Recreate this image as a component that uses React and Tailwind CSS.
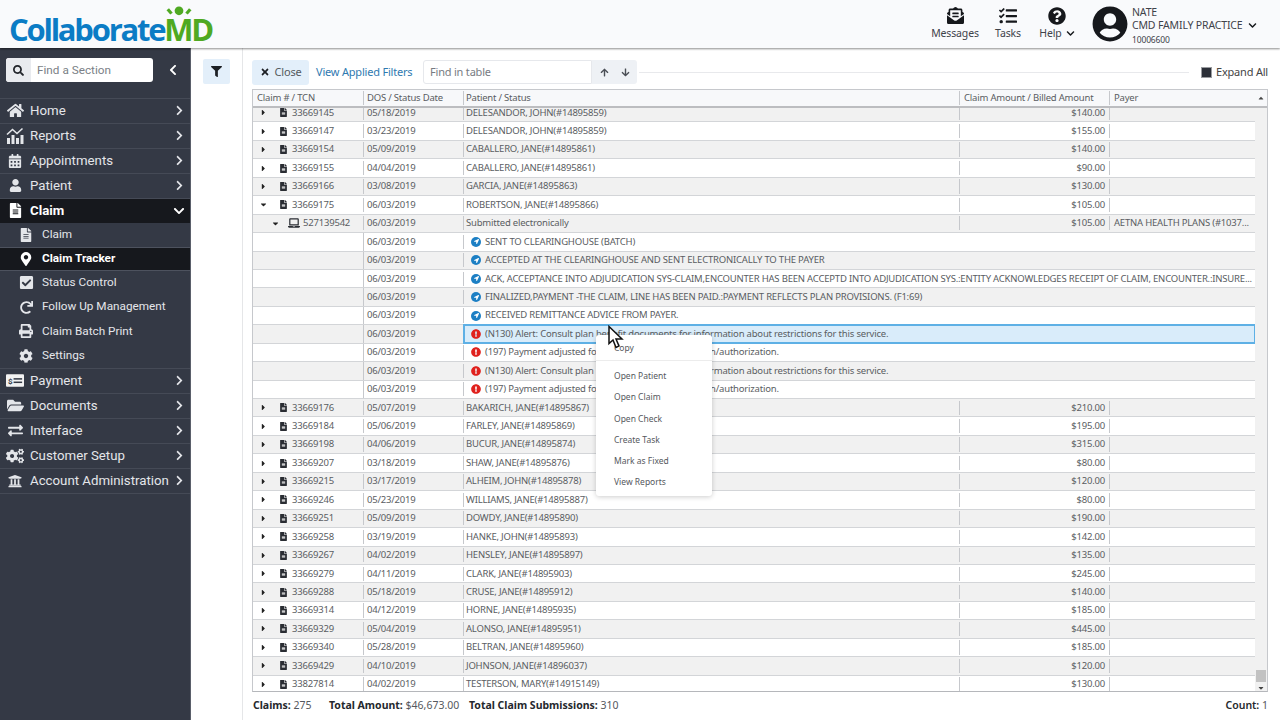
import {
  FaHome, FaCalendarAlt, FaUser, FaFileAlt, FaMapMarkerAlt, FaCheckSquare, FaRedo, FaPrint, FaCog,
  FaFolderOpen, FaExchangeAlt, FaCogs, FaUniversity, FaSearch, FaChevronLeft, FaChevronRight, FaChevronDown,
  FaFilter, FaTimes, FaArrowUp, FaArrowDown, FaEnvelopeOpenText, FaTasks, FaQuestionCircle, FaUserCircle,
  FaCaretRight, FaCaretDown, FaCaretUp, FaLaptop, FaExclamationCircle, FaLocationArrow,
} from 'react-icons/fa';

const ReportsIcon = () => (
  <svg viewBox="0 0 18 18" className="w-[18px] h-[18px]" fill="currentColor">
    <rect x="1" y="11" width="3" height="6" />
    <rect x="5.5" y="8" width="3" height="9" />
    <rect x="10" y="11" width="3" height="6" />
    <rect x="14.5" y="8" width="3" height="9" />
    <path d="M1 7.5 L6.5 2.5 L11 6.5 L16.5 1.5" fill="none" stroke="currentColor" strokeWidth="1.6" />
  </svg>
);

const PaymentIcon = () => (
  <svg viewBox="0 0 19 13" className="w-[18px] h-[13px]">
    <rect width="19" height="13" rx="1" fill="#f2f2f2" />
    <text x="2" y="10" fontSize="8.5" fontWeight="700" fontFamily="Roboto, sans-serif" fill="#343945">$</text>
    <rect x="8" y="4" width="9" height="1.6" fill="#343945" />
    <rect x="8" y="7.6" width="9" height="1.6" fill="#343945" />
  </svg>
);

const TOP_NAV = [
  { label: 'Home', icon: <FaHome size={17} /> },
  { label: 'Reports', icon: <ReportsIcon /> },
  { label: 'Appointments', icon: <FaCalendarAlt size={14} /> },
  { label: 'Patient', icon: <FaUser size={13} /> },
];

const SUB_NAV = [
  { label: 'Claim', icon: <FaFileAlt size={14} /> },
  { label: 'Claim Tracker', icon: <FaMapMarkerAlt size={14} />, active: true },
  { label: 'Status Control', icon: <FaCheckSquare size={15} /> },
  { label: 'Follow Up Management', icon: <FaRedo size={13} /> },
  { label: 'Claim Batch Print', icon: <FaPrint size={14} /> },
  { label: 'Settings', icon: <FaCog size={14} /> },
];

const BOTTOM_NAV = [
  { label: 'Payment', icon: <PaymentIcon /> },
  { label: 'Documents', icon: <FaFolderOpen size={17} /> },
  { label: 'Interface', icon: <FaExchangeAlt size={15} /> },
  { label: 'Customer Setup', icon: <FaCogs size={18} /> },
  { label: 'Account Administration', icon: <FaUniversity size={14} /> },
];

const ROWS_TOP = [
  ['33669145', '05/18/2019', 'DELESANDOR, JOHN(#14895859)', '$140.00'],
  ['33669147', '03/23/2019', 'DELESANDOR, JOHN(#14895859)', '$155.00'],
  ['33669154', '05/09/2019', 'CABALLERO, JANE(#14895861)', '$140.00'],
  ['33669155', '04/04/2019', 'CABALLERO, JANE(#14895861)', '$90.00'],
  ['33669166', '03/08/2019', 'GARCIA, JANE(#14895863)', '$130.00'],
];

const STATUS_ROWS = [
  ['info', 'SENT TO CLEARINGHOUSE (BATCH)'],
  ['info', 'ACCEPTED AT THE CLEARINGHOUSE AND SENT ELECTRONICALLY TO THE PAYER'],
  ['info', 'ACK, ACCEPTANCE INTO ADJUDICATION SYS-CLAIM,ENCOUNTER HAS BEEN ACCEPTD INTO ADJUDICATION SYS.:ENTITY ACKNOWLEDGES RECEIPT OF CLAIM, ENCOUNTER.:INSURE...'],
  ['info', 'FINALIZED,PAYMENT -THE CLAIM, LINE HAS BEEN PAID.:PAYMENT REFLECTS PLAN PROVISIONS. (F1:69)'],
  ['info', 'RECEIVED REMITTANCE ADVICE FROM PAYER.'],
  ['alert', '(N130) Alert: Consult plan benefit documents for information about restrictions for this service.', true],
  ['alert', '(197) Payment adjusted for absence of precertification/authorization.'],
  ['alert', '(N130) Alert: Consult plan benefit documents for information about restrictions for this service.'],
  ['alert', '(197) Payment adjusted for absence of precertification/authorization.'],
];

const ROWS_BOTTOM = [
  ['33669176', '05/07/2019', 'BAKARICH, JANE(#14895867)', '$210.00'],
  ['33669184', '05/06/2019', 'FARLEY, JANE(#14895869)', '$195.00'],
  ['33669198', '04/06/2019', 'BUCUR, JANE(#14895874)', '$315.00'],
  ['33669207', '03/18/2019', 'SHAW, JANE(#14895876)', '$80.00'],
  ['33669215', '03/17/2019', 'ALHEIM, JOHN(#14895878)', '$120.00'],
  ['33669246', '05/23/2019', 'WILLIAMS, JANE(#14895887)', '$80.00'],
  ['33669251', '05/09/2019', 'DOWDY, JANE(#14895890)', '$190.00'],
  ['33669258', '03/19/2019', 'HANKE, JOHN(#14895893)', '$142.00'],
  ['33669267', '04/02/2019', 'HENSLEY, JANE(#14895897)', '$135.00'],
  ['33669279', '04/11/2019', 'CLARK, JANE(#14895903)', '$245.00'],
  ['33669288', '05/18/2019', 'CRUSE, JANE(#14895912)', '$140.00'],
  ['33669314', '04/12/2019', 'HORNE, JANE(#14895935)', '$185.00'],
  ['33669329', '05/04/2019', 'ALONSO, JANE(#14895951)', '$445.00'],
  ['33669340', '05/28/2019', 'BELTRAN, JANE(#14895960)', '$185.00'],
  ['33669429', '04/10/2019', 'JOHNSON, JANE(#14896037)', '$120.00'],
  ['33827814', '04/02/2019', 'TESTERSON, MARY(#14915149)', '$130.00'],
];

const MENU_ITEMS = ['Open Patient', 'Open Claim', 'Open Check', 'Create Task', 'Mark as Fixed', 'View Reports'];

const NavItem = ({ item, open }) => (
  <div className={`h-[25px] flex items-center pl-[6px] pr-[5px] border-t border-[#454a56] text-[13.25px] ${open ? 'bg-[#16181d] text-white font-bold' : 'text-[#e4e6ea]'}`}>
    <span className="w-[18px] flex justify-center shrink-0">{item.icon}</span>
    <span className="ml-[6px] flex-1 whitespace-nowrap">{item.label}</span>
    {open ? <FaChevronDown size={12} /> : <FaChevronRight size={11} />}
  </div>
);

const SubItem = ({ item }) => (
  <div className={`h-[24.2px] flex items-center pl-[18px] text-[11.75px] ${item.active ? 'bg-[#16181d] border-y border-[#4d525e] text-white font-bold' : 'text-[#e4e6ea]'}`}>
    <span className="w-[16px] flex justify-center shrink-0">{item.icon}</span>
    <span className="ml-[8px] whitespace-nowrap">{item.label}</span>
  </div>
);

const Sidebar = () => (
  <aside className="w-[191px] shrink-0 bg-[#343945] border-r border-[#5a5f6a] font-['Roboto',sans-serif] flex flex-col">
    <div className="h-[49.5px] shrink-0 flex items-start pt-[10px] pl-[6px]">
      <div className="w-[147px] h-[24px] flex bg-white rounded-[3px] overflow-hidden">
        <span className="w-[25px] bg-[#e9ebef] flex items-center justify-center text-[#23262c]"><FaSearch size={11} /></span>
        <span className="pl-[6px] text-[11.75px] leading-[24px] text-[#7b7f86]">Find a Section</span>
      </div>
      <FaChevronLeft size={12} className="ml-[14px] mt-[6px] text-white" />
    </div>
    {TOP_NAV.map((item) => <NavItem key={item.label} item={item} />)}
    <NavItem item={{ label: 'Claim', icon: <FaFileAlt size={15} /> }} open />
    {SUB_NAV.map((item) => <SubItem key={item.label} item={item} />)}
    {BOTTOM_NAV.map((item) => <NavItem key={item.label} item={item} />)}
    <div className="border-t border-[#454a56]" />
  </aside>
);

const Header = () => (
  <header className="relative z-10 h-[48px] shrink-0 bg-[#f9fafc] shadow-[0_1px_2px_rgba(0,0,0,0.45)] flex items-center pl-[9px] pr-[22px] font-['Noto_Sans',sans-serif] text-[#3f434a] text-[10.5px] tracking-[-0.15px]">
    <div className="relative flex items-baseline mt-[11px] font-['Open_Sans',sans-serif] font-bold text-[31px] tracking-[-2.25px] leading-none">
      <span className="text-[#0b7cc5]">Collaborate</span>
      <span className="text-[#4fa922]">MD</span>
      <svg viewBox="0 0 48 18" className="absolute right-[18px] -top-[9px] w-[30px] h-[14px]" fill="#4fa922">
        <circle cx="24" cy="7" r="7" />
        <path d="M4 6 L8 3 L14 10 L10 13 Z" />
        <path d="M44 6 L40 3 L34 10 L38 13 Z" />
      </svg>
    </div>
    <div className="ml-auto flex items-center">
      <div className="flex flex-col items-center w-[60px]">
        <FaEnvelopeOpenText size={17} className="text-[#16181c]" />
        <span className="leading-[15px] mt-[2px]">Messages</span>
      </div>
      <div className="flex flex-col items-center w-[40px] ml-[3px]">
        <FaTasks size={18} className="text-[#16181c]" />
        <span className="leading-[15px] mt-[1px]">Tasks</span>
      </div>
      <div className="flex flex-col items-center w-[48px] ml-[5px]">
        <FaQuestionCircle size={18} className="text-[#16181c]" />
        <span className="leading-[15px] mt-[1px] flex items-center gap-[4px]">Help <FaChevronDown size={9} className="text-[#16181c]" /></span>
      </div>
      <FaUserCircle size={36} className="ml-[11px] text-[#16181c]" />
      <div className="ml-[4px] mt-[4px] w-[126px] leading-[13px] whitespace-nowrap">
        <div>NATE</div>
        <div className="flex items-center gap-[5px]">CMD FAMILY PRACTICE <FaChevronDown size={9} className="text-[#16181c]" /></div>
        <div className="text-[8.5px] leading-[15px]">10006600</div>
      </div>
    </div>
  </header>
);

const Toolbar = () => (
  <div className="h-[28px] flex items-center text-[11px] tracking-[-0.2px]">
    <button className="w-[57px] h-[25px] bg-[#e3effa] rounded-[3px] flex items-center justify-center gap-[5px] text-[#555a60]">
      <FaTimes size={10} className="text-[#1d2025]" /> Close
    </button>
    <span className="ml-[7px] w-[107px] whitespace-nowrap text-[#2f79b0]">View Applied Filters</span>
    <div className="w-[169px] h-[24px] bg-white border border-[#e6e8ec] rounded-l-[3px] pl-[6px] leading-[22px] text-[#777b82]">Find in table</div>
    <div className="w-[45px] h-[24px] bg-[#eef1f5] rounded-r-[3px] flex items-center justify-center gap-[12px] text-[#4a4e55]">
      <FaArrowUp size={9} />
      <FaArrowDown size={9} />
    </div>
    <div className="flex-1 mx-[2px] h-px bg-[#e8e9ec]" />
    <span className="ml-[10px] w-[11px] h-[11px] bg-[#2c3038] border border-[#9a9ca0] shrink-0" />
    <span className="ml-[4px] whitespace-nowrap text-[#444]">Expand All</span>
  </div>
);

// shared column widths so the header and body line up
const COL1 = 'w-[111px] shrink-0 border-r border-[#c6c8cc]';
const COL2 = 'w-[100px] shrink-0 border-r border-[#c6c8cc] pl-[3px]';
const COL3 = 'w-[496px] shrink-0 border-r border-[#c6c8cc] pl-[2px]';
const COL4 = 'w-[150px] shrink-0 border-r border-[#c6c8cc] pr-[4px] text-right';

const rowClass = (i) => `h-[18.45px] flex items-center border-b border-[#d3d5d8] whitespace-nowrap ${i % 2 === 0 ? 'bg-[#f1f1f1]' : 'bg-white'}`;

const ClaimRow = ({ row, index, open }) => (
  <div className={rowClass(index)}>
    <div className={`${COL1} flex items-center pl-[6px]`}>
      {open ? <FaCaretDown size={9} className="text-[#222]" /> : <FaCaretRight size={9} className="text-[#222]" />}
      <FaFileAlt size={9} className="ml-[11px] text-[#2a2d33]" />
      <span className="ml-[4px]">{row[0]}</span>
    </div>
    <div className={COL2}>{row[1]}</div>
    <div className={COL3}>{row[2]}</div>
    <div className={COL4}>{row[3]}</div>
    <div className="pl-[4px]">{row[4]}</div>
  </div>
);

const StatusRow = ({ row, index }) => (
  <div className={rowClass(index)}>
    <div className={`${COL1} self-stretch`} />
    <div className={COL2}>06/03/2019</div>
    <div className={`flex-1 self-stretch flex items-center pl-[7px] overflow-hidden ${row[2] ? 'bg-[#d9ecfa] outline-2 -outline-offset-1 outline-[#5eb0e5]' : ''}`}>
      {row[0] === 'info' ? (
        <span className="w-[10px] h-[10px] rounded-full bg-[#1c7fc4] flex items-center justify-center shrink-0">
          <FaLocationArrow size={5} className="text-white" />
        </span>
      ) : (
        <FaExclamationCircle size={10} className="text-[#e0211d] shrink-0" />
      )}
      <span className="ml-[4px]">{row[1]}</span>
    </div>
  </div>
);

const ClaimsTable = () => (
  <div className="relative h-[603px] border border-[#c6c8cc] border-b-[#b5b7bb] font-['Noto_Sans',sans-serif] text-[9.5px] tracking-[-0.2px] text-[#5a5d62] overflow-hidden">
    <div className="relative z-10 h-[18px] flex items-center bg-[#f7f8fa] border-b-2 border-[#bcbdc0] whitespace-nowrap">
      <div className={`${COL1} pl-[4px]`}>Claim # / TCN</div>
      <div className={COL2}>DOS / Status Date</div>
      <div className={COL3}>Patient / Status</div>
      <div className="w-[150px] shrink-0 border-r border-[#c6c8cc] pl-[4px]">Claim Amount / Billed Amount</div>
      <div className="pl-[4px] flex-1">Payer</div>
      <div className="w-[12px] shrink-0 flex justify-center text-[#444]"><FaCaretUp size={8} /></div>
    </div>
    <div className="flex">
      <div className="flex-1 min-w-0 -mt-[4px]">
        {ROWS_TOP.map((r, i) => <ClaimRow key={r[0]} row={r} index={i} />)}
        <ClaimRow row={['33669175', '06/03/2019', 'ROBERTSON, JANE(#14895866)', '$105.00']} index={5} open />
        <div className={rowClass(6)}>
          <div className={`${COL1} flex items-center pl-[18px]`}>
            <FaCaretDown size={9} className="text-[#222]" />
            <FaLaptop size={12} className="ml-[8px] text-[#2a2d33]" />
            <span className="ml-[3px]">527139542</span>
          </div>
          <div className={COL2}>06/03/2019</div>
          <div className={COL3}>Submitted electronically</div>
          <div className={COL4}>$105.00</div>
          <div className="pl-[4px]">AETNA HEALTH PLANS (#1037...</div>
        </div>
        {STATUS_ROWS.map((r, i) => <StatusRow key={i} row={r} index={i + 7} />)}
        {ROWS_BOTTOM.map((r, i) => <ClaimRow key={r[0]} row={r} index={i + 16} />)}
      </div>
      <div className="w-[12px] shrink-0 h-[585px] bg-[#f1f1f1] flex flex-col justify-end items-center pb-[1px] text-[#444]">
        <div className="w-[10px] h-[12px] bg-[#c2c2c2]" />
        <FaCaretDown size={8} className="mt-[2px]" />
      </div>
    </div>
  </div>
);

const ContextMenu = () => (
  <div className="absolute left-[596px] top-[335px] w-[116px] h-[161px] bg-white rounded-[3px] shadow-[0_1px_5px_rgba(0,0,0,0.2)] font-['Noto_Sans',sans-serif] text-[8.5px] text-[#55585d] pl-[18px]">
    <div className="h-[26px] leading-[25px] -ml-[18px] pl-[18px] border-b border-[#ececec]">Copy</div>
    <div className="pt-[4px]">
      {MENU_ITEMS.map((m) => <div key={m} className="h-[21.3px] leading-[21.3px]">{m}</div>)}
    </div>
  </div>
);

const Cursor = () => (
  <svg viewBox="0 0 17 24" className="absolute left-[608px] top-[325px] w-[17px] h-[25px]">
    <path d="M1 1 L1 18 L5 14.5 L8 22 L11 20.5 L8 13.5 L14 13.5 Z" fill="#fff" stroke="#111" strokeWidth="1.5" />
  </svg>
);

const App = () => (
  <div className="relative w-[1280px] h-[720px] overflow-hidden bg-white flex flex-col">
    <Header />
    <div className="flex flex-1 min-h-0">
      <Sidebar />
      <div className="w-[52px] shrink-0 pl-[12px] pt-[11px]">
        <div className="w-[27px] h-[25px] bg-[#e3effa] rounded-[2px] flex items-center justify-center text-[#1d2025]">
          <FaFilter size={11} />
        </div>
      </div>
      <main className="flex-1 min-w-0 border-l border-[#e5e6e8] -ml-[1px] pl-[9px] pr-[12px] pt-[10px] flex flex-col">
        <Toolbar />
        <div className="mt-[3px]"><ClaimsTable /></div>
        <div className="flex items-center h-[27px] pl-[1px] font-['Noto_Sans',sans-serif] text-[10.5px] text-[#55585d] whitespace-nowrap">
          <span className="w-[76px]"><b className="text-[#25282d]">Claims:</b> 275</span>
          <span className="w-[140px]"><b className="text-[#25282d]">Total Amount:</b> $46,673.00</span>
          <span><b className="text-[#25282d]">Total Claim Submissions:</b> 310</span>
          <span className="ml-auto"><b className="text-[#25282d] font-semibold">Count:</b> 1</span>
        </div>
      </main>
    </div>
    <ContextMenu />
    <Cursor />
  </div>
);

export default App;
